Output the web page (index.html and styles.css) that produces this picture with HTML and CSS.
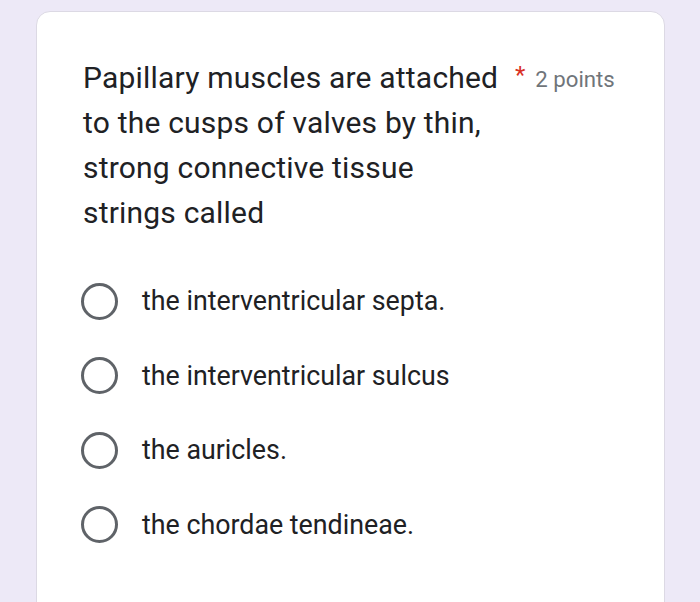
FILE: index.html
```html
<!DOCTYPE html>
<html>
<head>
<meta charset="utf-8">
<link rel="stylesheet" href="styles.css">
</head>
<body>
<div class="card">
  <div class="header">
    <div class="question">Papillary muscles are attached to the cusps of valves by thin, strong connective tissue strings called</div>
    <span class="req">*</span>
    <span class="points">2 points</span>
  </div>
  <div class="options">
    <div class="option"><span class="radio"></span><span class="label">the interventricular septa.</span></div>
    <div class="option"><span class="radio"></span><span class="label">the interventricular sulcus</span></div>
    <div class="option"><span class="radio"></span><span class="label">the auricles.</span></div>
    <div class="option"><span class="radio"></span><span class="label">the chordae tendineae.</span></div>
  </div>
</div>
</body>
</html>
```
FILE: styles.css
```css
html, body {
  margin: 0;
  padding: 0;
  background: #ede9f7;
  height: 602px;
  overflow: hidden;
}
body {
  padding: 11px 0 0 36px;
  font-family: Roboto, "Liberation Sans", sans-serif;
}
.card {
  box-sizing: border-box;
  width: 629px;
  height: 620px;
  background: #fff;
  border: 1px solid #dcd9e4;
  border-radius: 14px;
  padding: 43px 0 0 46px;
}
.header {
  display: flex;
  align-items: flex-start;
}
.question {
  width: 420px;
  flex: none;
  font-size: 30px;
  letter-spacing: 0.2px;
  line-height: 45px;
  color: #202124;
}
.req {
  color: #d93025;
  font-size: 24px;
  line-height: 22px;
  margin: 9px 0 0 12px;
}
.points {
  color: #70757a;
  font-size: 22.2px;
  line-height: 45px;
  margin-left: 10px;
  margin-top: 2px;
}
.options {
  margin-top: 29px;
  display: flex;
  flex-direction: column;
}
.option {
  display: flex;
  align-items: center;
  height: 74.5px;
}
.radio {
  box-sizing: border-box;
  width: 37px;
  height: 37px;
  border: 3.5px solid #5f6368;
  border-radius: 50%;
  margin-left: -2px;
}
.label {
  margin-left: 24px;
  font-size: 26.8px;
  color: #202124;
}
```
